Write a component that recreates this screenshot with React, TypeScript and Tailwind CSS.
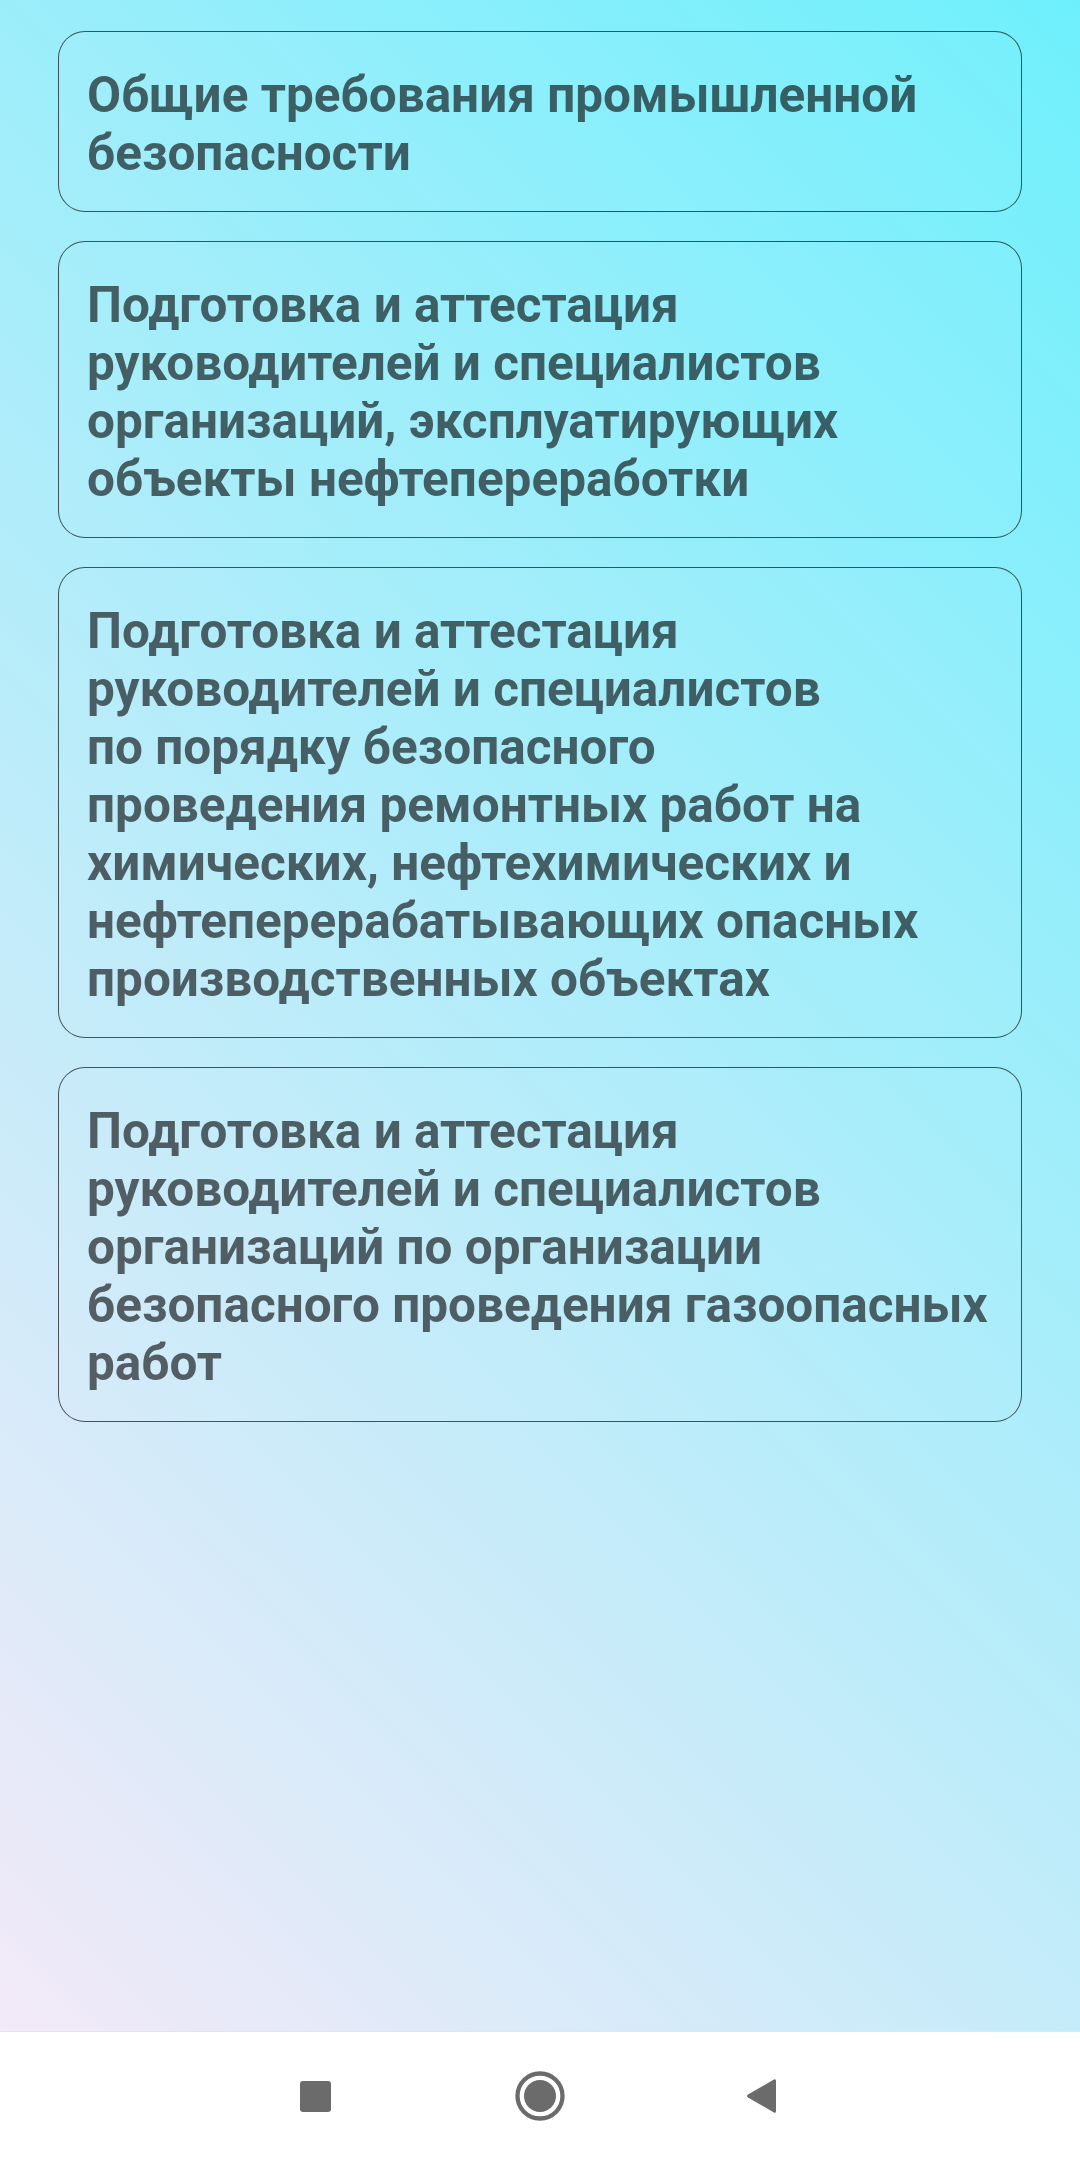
import React from "react";

// ─── Data ─────────────────────────────────────────────────────────────────────

const TOPICS: string[][] = [
  ["Общие требования промышленной", "безопасности"],
  [
    "Подготовка и аттестация",
    "руководителей и специалистов",
    "организаций, эксплуатирующих",
    "объекты нефтепереработки",
  ],
  [
    "Подготовка и аттестация",
    "руководителей и специалистов",
    "по порядку безопасного",
    "проведения ремонтных работ на",
    "химических, нефтехимических и",
    "нефтеперерабатывающих опасных",
    "производственных объектах",
  ],
  [
    "Подготовка и аттестация",
    "руководителей и специалистов",
    "организаций по организации",
    "безопасного проведения газоопасных",
    "работ",
  ],
];

// ─── Components ───────────────────────────────────────────────────────────────

function TopicCard({ lines }: { lines: string[] }) {
  return (
    <button className="block w-full text-left rounded-[27px] border border-black/65 bg-white/[0.03] pl-[28px] pr-[20px] pt-[34px] pb-[29px]">
      <span className="block text-[49.5px] leading-[58px] font-bold text-black/60 font-['Roboto','Noto_Sans',sans-serif]">
        {lines.map((l, i) => (
          <span key={i} className="block whitespace-nowrap">
            {l}
          </span>
        ))}
      </span>
    </button>
  );
}

function NavBar() {
  return (
    <div className="h-[129px] shrink-0 bg-white border-t border-[#e4e4ea] flex items-center pl-[300px]">
      <div className="w-[31px] h-[31px] rounded-[3px] bg-[#6b6b6b]" />
      <svg width="50" height="50" viewBox="0 0 50 50" className="ml-[184px]">
        <circle cx="25" cy="25" r="22.5" fill="none" stroke="#6b6b6b" strokeWidth="4.3" />
        <circle cx="25" cy="25" r="16" fill="#6b6b6b" />
      </svg>
      <svg width="32" height="38" viewBox="0 0 32 38" className="ml-[180px]">
        <path
          d="M29 2.5 Q31 1.5 31 4 L31 34 Q31 36.5 29 35.5 L3 20.5 Q1 19 3 17.5 Z"
          fill="#6b6b6b"
        />
      </svg>
    </div>
  );
}

export default function App() {
  return (
    <div className="w-[1080px] h-[2160px] flex flex-col overflow-hidden font-['Roboto',sans-serif]">
      <div className="flex-1 bg-[linear-gradient(45deg,#f3e9f8,#6ef0fc)] px-[58px] pt-[31px]">
        <div className="flex flex-col gap-[29px]">
          {TOPICS.map((t, i) => (
            <TopicCard key={i} lines={t} />
          ))}
        </div>
      </div>
      <NavBar />
    </div>
  );
}
